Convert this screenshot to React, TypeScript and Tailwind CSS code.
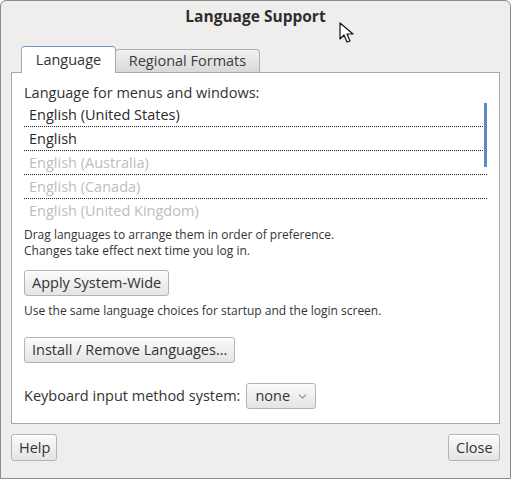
import { ChevronDown } from 'lucide-react';

const rows = [
  { label: 'English (United States)', enabled: true },
  { label: 'English', enabled: true },
  { label: 'English (Australia)', enabled: false },
  { label: 'English (Canada)', enabled: false },
  { label: 'English (United Kingdom)', enabled: false },
];

const btn =
  'h-[26px] px-[7px] rounded-[3px] border border-[#b3b3b3] bg-gradient-to-b from-[#fbfbfb] to-[#e4e4e4] text-[#333] shadow-[inset_0_1px_0_#fff]';

function Cursor() {
  return (
    <svg className="absolute left-[338px] top-[21px]" width="16" height="22" viewBox="0 0 16 22">
      <path d="M1 1 L1 17 L5 13 L8 20 L11 19 L8 12 L14 12 Z" fill="#fff" stroke="#111" strokeWidth="1.2" strokeLinejoin="round" />
    </svg>
  );
}

export default function App() {
  return (
    <div className="relative w-[511px] h-[479px] bg-[#efeeed] border border-[#8c8c8c] rounded-t-[6px] flex flex-col text-[#333] font-['Open_Sans',sans-serif]">
      <div className="h-[31px] flex items-center justify-center text-[15.5px] font-bold text-[#2e2e2e]">
        Language Support
      </div>

      {/* tabs */}
      <div className="flex items-end ml-[20px] h-[27px] mt-[13px]">
        <div className="h-[27px] w-[95px] flex items-center justify-center bg-white border border-b-0 border-[#a9a9a9] border-t-[#6d9bd1] rounded-t-[4px] text-[14.5px] relative z-10 -mb-[1px]">
          Language
        </div>
        <div className="h-[23px] w-[145px] flex items-center justify-center bg-gradient-to-b from-[#f0f0f0] to-[#d9d9d9] border border-b-0 border-[#b0b0b0] rounded-t-[4px] text-[14.5px] text-[#3c3c3c] -ml-[1px]">
          Regional Formats
        </div>
      </div>

      {/* panel */}
      <div className="mx-[10px] h-[352px] bg-white border border-[#a9a9a9] px-[12px] pt-[11px] flex flex-col">
        <div className="text-[14.5px] leading-[18px]">Language for menus and windows:</div>
        <div className="relative mt-[1px]">
          {rows.map((r, i) => (
            <div
              key={r.label}
              className={`h-[24px] pl-[5px] flex items-center text-[14.5px] ${i < 4 ? 'border-b border-dotted border-[#222]' : ''} ${r.enabled ? 'text-[#2b2b2b]' : 'text-[#bdbdbd]'}`}
            >
              {r.label}
            </div>
          ))}
          <div className="absolute right-0 top-0 w-[3px] h-[64px] bg-[#5a8cbf]" />
        </div>

        <div className="mt-[4px] text-[12px] leading-[16px]">
          <div>Drag languages to arrange them in order of preference.</div>
          <div>Changes take effect next time you log in.</div>
        </div>

        <div className="mt-[11px]">
          <button className={`${btn} text-[14.5px]`}>Apply System-Wide</button>
        </div>

        <div className="mt-[7px] text-[12px] leading-[16px]">
          Use the same language choices for startup and the login screen.
        </div>

        <div className="mt-[18px]">
          <button className={`${btn} text-[14.5px]`}>Install / Remove Languages...</button>
        </div>

        <div className="mt-[20px] flex items-center gap-[6px]">
          <span className="text-[14.5px]">Keyboard input method system:</span>
          <button className={`${btn} w-[70px] flex items-center justify-between text-[14.5px] pl-[8px] pr-[6px]`}>
            none
            <ChevronDown size={13} strokeWidth={2} className="text-[#8a8a8a]" />
          </button>
        </div>
      </div>

      <div className="mx-[10px] mt-[10px] flex justify-between">
        <button className={`${btn} h-[27px] w-[46px] text-[14.5px]`}>Help</button>
        <button className={`${btn} h-[27px] w-[52px] text-[14.5px]`}>Close</button>
      </div>

      <Cursor />
    </div>
  );
}
